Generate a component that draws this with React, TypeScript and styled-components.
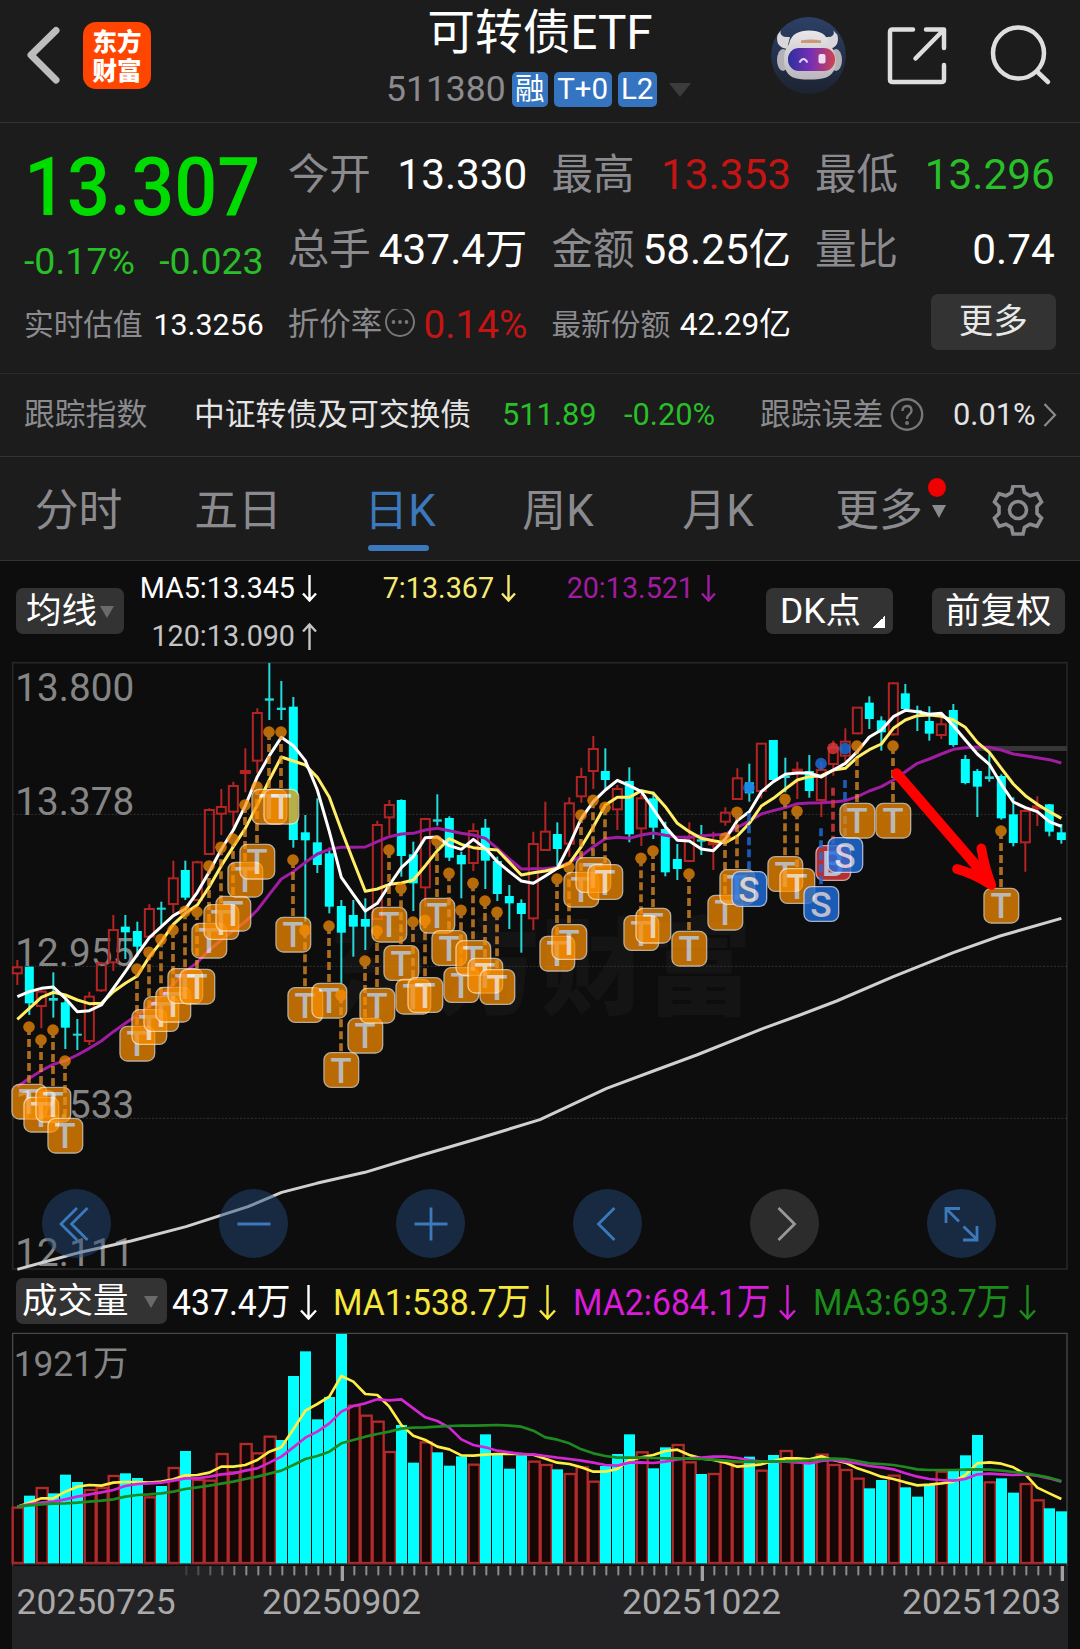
import React from 'react';
import styled, { createGlobalStyle } from 'styled-components';

const GlobalStyle = createGlobalStyle`
  * { box-sizing: border-box; }
  body {
    margin: 0;
    background: #0d0d0d;
    font-family: Roboto, "Noto Sans CJK SC", sans-serif;
    line-height: 1.2;
    color: #fff;
  }
  svg { display: block; flex-shrink: 0; }
`

const Page = styled.div`
  width: 1080px;
  height: 1649px;
  overflow: hidden;
  background: #0d0d0d;
`

/* ---------- header ---------- */

const Header = styled.header`
  display: grid;
  grid-template-columns: 384px 1fr 384px;
  height: 123px;
  background: #1c1c1c;
  border-bottom: 1px solid #333;
`

const HeaderLeft = styled.div`
  display: flex;
  align-items: flex-start;
  padding: 22px 0 0 23px;
  gap: 20px;
`

const Logo = styled.div`
  width: 68px;
  height: 67px;
  padding-top: 4px;
  border-radius: 13px;
  background: #ff4500;
  color: #fff;
  font-family: "Noto Sans CJK SC", sans-serif;
  font-size: 24.5px;
  font-weight: 900;
  line-height: 29px;
  text-align: center;
`

const HeaderTitle = styled.div`
  display: flex;
  flex-direction: column;
  align-items: center;
`

const Title = styled.div`
  height: 63px;
  line-height: 66px;
  font-size: 47.7px;
  white-space: nowrap;
`

const SubTitle = styled.div`
  display: flex;
  align-items: center;
  align-self: flex-start;
  height: 53px;
  padding-left: 2px;
  color: #8b8b8f;
  font-size: 35.5px;
`

const Tag = styled.span<{ $w: number }>`
  width: ${p => p.$w}px;
  height: 35px;
  margin-left: 6px;
  border-radius: 5px;
  background: #3474c0;
  color: #fff;
  font-size: 29.5px;
  line-height: 35px;
  text-align: center;
`

const HeaderRight = styled.div`
  display: flex;
  align-items: flex-start;
  padding: 17px 0 0 75px;
`

const Triangle = styled.i<{ $w: number; $h: number; $color: string; $left?: number }>`
  width: 0;
  height: 0;
  margin-left: ${p => p.$left || 0}px;
  border-left: ${p => p.$w / 2}px solid transparent;
  border-right: ${p => p.$w / 2}px solid transparent;
  border-top: ${p => p.$h}px solid ${p => p.$color};
`

/* ---------- quote ---------- */

const Quote = styled.section`
  height: 251px;
  padding: 14px 25px 0 24px;
  background: #1c1c1c;
  border-bottom: 1px solid #2a2a2a;
`

const QuoteRow = styled.div<{ $h: number }>`
  display: grid;
  grid-template-columns: repeat(4, 239.7px);
  column-gap: 24px;
  height: ${p => p.$h}px;
`

const Price = styled.div`
  height: 100px;
  line-height: 101px;
  color: #00dc00;
  font-size: 81px;
  font-weight: 500;
  transform: scaleX(0.935);
  transform-origin: left;
`

const Change = styled.div`
  display: flex;
  justify-content: space-between;
  height: 49px;
  line-height: 49px;
  color: #28bf28;
  font-size: 37.5px;
`

const Stat = styled.div<{ $h: number }>`
  display: flex;
  align-items: center;
  justify-content: space-between;
  height: ${p => p.$h}px;
  padding-top: 1px;
  white-space: nowrap;
`

const Label = styled.span<{ $size: number }>`
  color: #8b8b8f;
  font-size: ${p => p.$size}px;
`

const Value = styled.span<{ $size: number; $color?: string }>`
  color: ${p => p.$color || '#fff'};
  font-size: ${p => p.$size}px;
`

const MoreButton = styled.button`
  width: 125px;
  height: 56px;
  margin: -6px -1px 0 auto;
  border: none;
  border-radius: 7px;
  background: #333;
  color: #e8e8e8;
  font-family: inherit;
  font-size: 34.5px;
  line-height: 55px;
  padding: 0 0 1px;
`

/* ---------- tracked index ---------- */

const IndexRow = styled.section`
  display: flex;
  align-items: center;
  height: 83px;
  padding: 0 22px 0 24px;
  background: #1c1c1c;
  border-bottom: 1px solid #333;
  font-size: 30.8px;
  white-space: nowrap;
`

const IndexCell = styled.span<{ $w: number; $color: string; $left?: number }>`
  width: ${p => p.$w}px;
  margin-left: ${p => p.$left || 0}px;
  color: ${p => p.$color};
`

/* ---------- period tabs ---------- */

const Tabs = styled.nav`
  display: grid;
  grid-template-columns: 157px 162px 162px 154px 166px 179px 76px;
  height: 104px;
  background: #1c1c1c;
  border-bottom: 1px solid #333;
`

const Tab = styled.div<{ $active?: boolean }>`
  position: relative;
  display: flex;
  align-items: center;
  justify-content: center;
  height: 109px;
  color: ${p => (p.$active ? '#3c78bc' : '#8b8b8f')};
  font-size: 43.8px;
  white-space: nowrap;
`

const Underline = styled.i`
  position: absolute;
  bottom: 15px;
  left: 49px;
  width: 61px;
  height: 6px;
  border-radius: 3px;
  background: #3c78bc;
`

const RedDot = styled.i`
  position: absolute;
  top: 21px;
  right: 34px;
  width: 18px;
  height: 19px;
  border-radius: 50%;
  background: #f00000;
`

/* ---------- chart ---------- */

const InfoBar = styled.div`
  display: flex;
  height: 94px;
`

const Chip = styled.div<{ $w: number; $left?: number; $top: number }>`
  display: flex;
  align-items: center;
  flex-shrink: 0;
  width: ${p => p.$w}px;
  height: 46px;
  margin: ${p => p.$top}px 0 0 ${p => p.$left || 0}px;
  padding-top: 1px;
  border-radius: 7px;
  background: #333;
  font-size: 35.5px;
  white-space: nowrap;
`

const ChipText = styled.span<{ $left: number }>`
  margin-left: ${p => p.$left}px;
`

const Corner = styled.i`
  width: 12px;
  height: 12px;
  margin: 20px 0 0 12px;
  background: linear-gradient(135deg, transparent 50%, #fff 50%);
`

const MaGrid = styled.div`
  display: grid;
  grid-template-columns: 193px 199px 200px;
  grid-auto-rows: 48px;
  padding-top: 3px;
`

const MaItem = styled.div<{ $color: string }>`
  display: flex;
  align-items: center;
  justify-content: flex-end;
  gap: 7px;
  color: ${p => p.$color};
  font-size: 28.7px;
`

const KlineBox = styled.div`
  position: relative;
  height: 620px;
`

const Controls = styled.div`
  position: absolute;
  left: 42px;
  top: 534px;
  display: flex;
  gap: 108px;
`

const RoundButton = styled.div<{ $muted?: boolean }>`
  display: flex;
  align-items: center;
  justify-content: center;
  width: 69px;
  height: 69px;
  border-radius: 50%;
  color: ${p => (p.$muted ? '#999' : '#3c78bc')};
  background: ${p => (p.$muted ? '#2c2c2c' : 'rgba(36, 77, 126, 0.46)')};
`

const VolumeBar = styled.div`
  display: flex;
  height: 55px;
`

const VolumeItem = styled.div<{ $w: number; $left: number; $color: string }>`
  display: flex;
  align-items: center;
  width: ${p => p.$w}px;
  height: 55px;
  margin-left: ${p => p.$left}px;
  color: ${p => p.$color};
  font-size: 37.3px;
  svg { margin-left: auto; }
`

const Narrow = styled.span`
  width: 0;
  white-space: nowrap;
  span {
    display: inline-block;
    transform: scaleX(0.905);
    transform-origin: left;
  }
`

const Axis = styled.div`
  width: 1056px;
  height: 84px;
  margin-left: 12px;
  background: #232325;
`

const Dates = styled.div`
  display: grid;
  grid-template-columns: 245.5px 360px 280px 160px;
  padding-left: 4.5px;
  color: #aaa;
  font-size: 35.4px;
  line-height: 32px;
  height: 32px;
`

/* Plot data is kept in device pixels, three to one css pixel. */
const x = (i: number) => 52 + i * 36;

type Bar = [string, number, number, number, number];

// side, high, body top, body bottom, low
const candles: Bar[] = [
  ['r', 915, 937, 955, 990], ['c', 935, 935, 1045, 1080], ['r', 1005, 1010, 1053, 1120], ['c', 952, 1029, 1037, 1088],
  ['c', 1030, 1042, 1118, 1182], ['c', 1092, 1136, 1142, 1185], ['r', 1010, 1025, 1158, 1170], ['r', 922, 925, 1006, 1010],
  ['r', 780, 825, 922, 948], ['c', 780, 815, 832, 912], ['c', 800, 828, 875, 905], ['r', 748, 762, 845, 850],
  ['c', 740, 758, 764, 812], ['r', 617, 670, 747, 775], ['c', 617, 645, 728, 735], ['r', 617, 622, 735, 738],
  ['r', 460, 465, 597, 600], ['r', 402, 456, 476, 540], ['r', 380, 393, 470, 515], ['r', 280, 348, 354, 412],
  ['r', 160, 174, 317, 355], ['c', 24, 130, 137, 195], ['c', 78, 158, 165, 195], ['c', 126, 155, 555, 578],
  ['c', 480, 532, 556, 800], ['c', 430, 562, 630, 654], ['c', 578, 595, 755, 775], ['c', 735, 753, 833, 985],
  ['c', 735, 780, 815, 905], ['c', 730, 792, 815, 885], ['r', 497, 510, 792, 795], ['r', 435, 450, 487, 540],
  ['c', 433, 435, 603, 665], ['c', 560, 598, 685, 768], ['r', 488, 492, 697, 755], ['c', 418, 493, 500, 512],
  ['c', 484, 489, 608, 618], ['c', 590, 600, 628, 730], ['r', 505, 528, 624, 648], ['c', 492, 518, 617, 702],
  ['c', 605, 618, 717, 738], ['c', 690, 723, 745, 822], ['c', 733, 744, 777, 893], ['r', 530, 567, 790, 826],
  ['r', 440, 530, 585, 588], ['c', 502, 537, 582, 637], ['r', 427, 445, 566, 605], ['r', 338, 366, 424, 443],
  ['r', 243, 282, 348, 402], ['c', 280, 348, 375, 402], ['r', 390, 402, 463, 525], ['c', 337, 378, 538, 562],
  ['r', 418, 430, 520, 573], ['c', 410, 430, 518, 552], ['c', 500, 522, 652, 664], ['c', 567, 612, 642, 675],
  ['r', 502, 548, 618, 622], ['c', 510, 553, 560, 600], ['r', 530, 562, 568, 645], ['r', 457, 473, 500, 512],
  ['r', 340, 370, 432, 435], ['c', 326, 382, 415, 440], ['r', 266, 266, 408, 430], ['c', 255, 255, 375, 378],
  ['c', 308, 362, 369, 412], ['r', 320, 344, 350, 432], ['c', 300, 348, 408, 428], ['r', 320, 345, 435, 486],
  ['r', 257, 278, 327, 362], ['r', 220, 260, 302, 320], ['r', 157, 158, 235, 238], ['c', 124, 143, 192, 222],
  ['c', 184, 196, 232, 287], ['r', 82, 85, 238, 242], ['c', 87, 115, 162, 170], ['c', 152, 165, 172, 228],
  ['c', 154, 198, 236, 257], ['r', 178, 208, 240, 252], ['c', 147, 165, 270, 275], ['c', 300, 312, 384, 388],
  ['c', 342, 348, 395, 486], ['c', 292, 364, 372, 380], ['c', 358, 363, 490, 494], ['c', 427, 478, 564, 574],
  ['r', 462, 468, 562, 650], ['r', 424, 454, 460, 513], ['c', 447, 448, 530, 544], ['c', 507, 532, 555, 566],
];

const ma5 = [
  1025, 1010, 1000, 996, 1030, 1070, 1067, 1050, 1000, 950, 898, 848, 815, 782, 762, 712, 650, 583, 525, 452, 365, 302,
  247, 272, 317, 405, 530, 667, 718, 768, 745, 690, 638, 605, 548, 546, 572, 583, 553, 580, 620, 650, 678, 685, 663, 640,
  570, 490, 440, 405, 376, 392, 410, 462, 515, 556, 558, 582, 587, 552, 497, 470, 410, 380, 358, 354, 354, 366, 345, 325,
  290, 246, 225, 185, 166, 170, 178, 175, 212, 255, 297, 328, 388, 441, 458, 470, 500, 514,
];

const ma7 = [
  1093, 1060, 1027, 1012, 1020, 1035, 1046, 1045, 1010, 985, 963, 905, 860, 808, 775, 750, 695, 632, 575, 520, 450, 375,
  306, 318, 330, 367, 427, 525, 618, 709, 702, 688, 684, 675, 632, 587, 551, 568, 578, 582, 585, 622, 660, 653, 648, 640,
  625, 575, 515, 450, 427, 427, 407, 415, 455, 505, 530, 550, 557, 563, 543, 505, 453, 430, 402, 375, 365, 362, 345, 340,
  307, 284, 267, 220, 195, 182, 180, 184, 195, 217, 262, 292, 340, 387, 422, 448, 470, 490,
];

const ma20 = [
  1295, 1270, 1247, 1228, 1217, 1200, 1180, 1158, 1130, 1105, 1080, 1055, 1025, 988, 950, 922, 885, 855, 827, 800, 765,
  718, 672, 650, 622, 597, 583, 577, 577, 576, 560, 545, 537, 535, 525, 520, 527, 535, 540, 550, 580, 612, 642, 641, 641,
  637, 623, 603, 575, 551, 547, 550, 540, 534, 541, 547, 547, 542, 540, 538, 517, 498, 477, 467, 458, 446, 444, 443, 441,
  437, 425, 408, 395, 375, 350, 325, 312, 297, 283, 278, 276, 277, 285, 297, 302, 308, 314, 324,
];

const ma120 =
  '52,1843 155,1815 248,1790 393,1758 558,1715 744,1655 845,1612 950,1585 1095,1552 1256,1503 1430,1452 1620,1394 ' +
  '1820,1300 1960,1248 2090,1200 2290,1120 2400,1080 2510,1038 2680,965 2860,893 3000,843 3184,790';

// kind, index, dot, badge centre, start of the dashed line
type Mark = [string, number, number, number?, number?];

const marks: Mark[] = [
  ['T', 1, 1116], ['T', 2, 1155], ['T', 3, 1125], ['T', 4, 1218], ['T', 10, 942], ['T', 11, 892], ['T', 12, 853],
  ['T', 13, 825], ['T', 14, 769], ['T', 15, 771], ['T', 16, 633], ['T', 17, 577], ['T', 18, 552], ['T', 19, 450],
  ['T', 20, 396], ['T', 21, 231], ['T', 22, 231], ['T', 23, 615], ['T', 24, 826], ['T', 26, 813], ['T', 27, 1021],
  ['T', 29, 918], ['T', 30, 828], ['T', 31, 585], ['T', 32, 700], ['T', 33, 801], ['T', 34, 796], ['T', 35, 558],
  ['T', 36, 655], ['T', 37, 766], ['T', 38, 685], ['T', 39, 738], ['T', 40, 772], ['T', 45, 672], ['T', 46, 637],
  ['T', 47, 480], ['T', 48, 436], ['T', 49, 457], ['T', 52, 610], ['T', 53, 588], ['T', 56, 657], ['T', 59, 549],
  ['T', 60, 472], ['S', 61, 398, 702, 475], ['T', 64, 433], ['T', 65, 469], ['B', 68, 280, 624, 398],
  ['S', 67, 326, 747, 520], ['S', 69, 281, 600, 375], ['T', 70, 273], ['T', 73, 273], ['T', 82, 528],
];

const markColors: Record<string, string[]> = {
  T: ['#ff9000', '#ffedd0'],
  S: ['#1e6fe0', '#c8dcff'],
  B: ['#e03a3a', '#ffc8c8'],
};

// side and top of every volume column
const volumes =
  'r1043 c1007 r984 c1000 c944 c966 r990 r984 r948 c940 c954 r1012 c978 r924 c873 r960 r962 r882 r937 r852 r880 r830 ' +
  'c840 c648 c574 c778 c711 c522 r737 r767 r785 r876 c795 c908 r847 c877 c917 c889 r914 c823 c880 c926 c886 r905 r915 ' +
  'c928 r942 r922 r965 c918 c882 c823 r877 c925 c862 r855 r907 c942 r942 r907 r907 c890 r932 c885 r873 r907 c908 r884 ' +
  'r915 r930 r956 c985 c960 r947 c982 c1010 c975 r935 c933 c886 c825 r967 c955 c998 r972 r1021 c1045 c1054';

const vol1 = [
  1040, 1028, 1015, 1015, 995, 980, 975, 977, 968, 966, 966, 968, 965, 958, 946, 945, 938, 920, 920, 915, 900, 875, 862,
  808, 752, 732, 710, 648, 665, 702, 705, 740, 795, 827, 840, 860, 868, 886, 887, 884, 882, 882, 882, 884, 896, 908, 912,
  922, 935, 935, 927, 900, 892, 885, 873, 869, 885, 895, 900, 908, 920, 917, 913, 903, 895, 895, 898, 889, 900, 908, 925,
  937, 950, 957, 967, 976, 974, 970, 965, 945, 910, 907, 911, 922, 943, 983, 1000, 1017,
];

const vol2 = [
  1040, 1033, 1028, 1025, 1018, 1010, 1003, 997, 990, 978, 972, 970, 968, 962, 955, 955, 950, 943, 940, 932, 925, 908,
  890, 862, 833, 815, 790, 755, 738, 730, 718, 721, 718, 745, 772, 783, 803, 838, 855, 862, 872, 877, 882, 883, 888, 893,
  897, 902, 908, 915, 917, 908, 907, 909, 905, 898, 895, 893, 890, 890, 894, 900, 905, 905, 905, 907, 910, 903, 900, 905,
  910, 918, 922, 928, 940, 950, 957, 960, 962, 957, 943, 941, 943, 945, 943, 947, 955, 965,
];

const vol3 = [
  1040, 1036, 1033, 1031, 1030, 1028, 1025, 1022, 1018, 1010, 1005, 1003, 1000, 995, 987, 982, 977, 971, 965, 957, 950,
  941, 932, 915, 897, 888, 875, 850, 840, 830, 822, 815, 806, 803, 802, 800, 798, 797, 797, 796, 795, 797, 800, 812, 832,
  839, 850, 868, 880, 888, 893, 893, 893, 894, 895, 895, 896, 897, 899, 902, 905, 905, 905, 904, 904, 903, 901, 898, 896,
  897, 903, 910, 912, 915, 921, 928, 930, 930, 930, 929, 928, 929, 932, 936, 940, 946, 953, 963,
];

const toPoints = (list: number[]) => list.map((y, i) => x(i) + ',' + y).join(' ');

const Arrow = ({ h, w, up }: { h: number; w: number; up?: boolean }) => (
  <svg width={w} height={h} viewBox={`0 0 ${w} ${h}`} fill="none" stroke="currentColor" strokeWidth="2.4">
    <path
      transform={up ? `rotate(180 ${w / 2} ${h / 2})` : undefined}
      d={`M${w / 2} 0V${h - 1.5}M1 ${h - w / 2 - 1}L${w / 2} ${h - 1.5}L${w - 1} ${h - w / 2 - 1}`}
    />
  </svg>
);

const Robot = () => (
  <svg width="76" height="78" viewBox="0 0 76 78">
    <defs>
      <linearGradient id="bg" x1="0" y1="0" x2="0" y2="1">
        <stop offset="0" stopColor="#2c4066" />
        <stop offset="1" stopColor="#1c2331" />
      </linearGradient>
      <linearGradient id="visor" x1="0" y1="0" x2="1" y2="0">
        <stop offset="0" stopColor="#2d2f9e" />
        <stop offset="0.5" stopColor="#7a2fb4" />
        <stop offset="1" stopColor="#cf4450" />
      </linearGradient>
      <linearGradient id="shell" x1="0" y1="0" x2="0" y2="1">
        <stop offset="0" stopColor="#e9e7ea" />
        <stop offset="1" stopColor="#bab6bb" />
      </linearGradient>
    </defs>
    <ellipse cx="37.500" cy="38.500" rx="37.400" ry="38.400" fill="url(#bg)" />
    <path d="M9.500 13.500Q8 21 19 20L16 32Q4 30 6.500 18ZM62.500 13.500Q65 21 54 20L58 32Q69 30 66.500 18Z" fill="#d9d7dc" />
    <ellipse cx="12" cy="43" rx="6" ry="11" fill="#b3b0b8" />
    <ellipse cx="65" cy="43" rx="6" ry="11" fill="#b3b0b8" />
    <path d="M38 13.500C49 13.500 56 17 58 27C64 33 66 42 64 51C61 60 54 62.500 38 62.500C23 62.500 17 60 14 51C12 42 13 33 18 27C20 17 28 13.500 38 13.500Z" fill="url(#shell)" />
    <path d="M30 23.500Q40 21.500 50 23.500V26H30Z" fill="#c99a78" />
    <rect x="17" y="31" width="47" height="23" rx="11" fill="url(#visor)" />
    <path d="M28.500 45.500Q32.500 38.500 36.500 45.500" fill="none" stroke="#dcd8ff" strokeWidth="2" />
    <rect x="47.500" y="37" width="7" height="9.500" rx="2" fill="#f0dcf0" />
  </svg>
);

const Kline = () => (
  <svg width="1080" height="620" viewBox="0 0 3240 1860" fontFamily='Roboto, "Noto Sans CJK SC", sans-serif'>
    <text x="985" y="1053" fontSize="318" fontWeight="900" fill="#141414">东方财富</text>
    <rect x="38" y="23" width="3163" height="1819" fill="none" stroke="#262626" strokeWidth="5" />
    {[478, 934, 1390].map(y => (
      <line key={y} x1="38" x2="3201" y1={y} y2={y} stroke="#333" strokeWidth="3" strokeDasharray="6 5" />
    ))}
    <rect x="2915" y="273" width="286" height="15" fill="#363636" />
    <g fontSize="116" fill="#858585">
      <text x="46" y="138">13.800</text>
      <text x="46" y="480">13.378</text>
      <text x="46" y="933">12.955</text>
      <text x="46" y="1388">12.533</text>
      <text x="46" y="1833">12.111</text>
    </g>
    {candles.map(([side, h, t, b, l], i) => side === 'c' ? (
      <g key={i}>
        <rect x={x(i) - 3} y={h} width="6" height={l - h} fill="#22dada" />
        <rect x={x(i) - 13.5} y={t} width="27" height={b - t} fill={b - t < 10 ? '#22dada' : '#00ffff'} />
      </g>
    ) : (
      <g key={i} stroke="#b22424" strokeWidth="6" fill="none">
        <path d={`M${x(i)} ${h}V${t}M${x(i)} ${b}V${l}`} />
        <rect x={x(i) - 13.5} y={t} width="27" height={b - t} />
      </g>
    ))}
    <g fill="none" strokeWidth="9" strokeLinejoin="round">
      <polyline points={ma120} stroke="#d0d0d0" />
      <polyline points={toPoints(ma20)} stroke="#a01ca0" />
      <polyline points={toPoints(ma7)} stroke="#ffee66" />
      <polyline points={toPoints(ma5)} stroke="#fff" />
    </g>
    {marks.map(([kind, i, dot, badge = dot + 224, from = dot]) => (
      <g key={i} opacity={kind === 'T' ? 0.71 : 0.8}>
        <circle cx={x(i) - 1} cy={dot} r="17.5" fill={markColors[kind][0]} />
        <path
          d={`M${x(i) - 1} ${from}V${badge - 53}`}
          stroke={kind === 'T' ? '#ef9426' : markColors[kind][0]}
          strokeWidth="11"
          strokeDasharray="24 12"
        />
        <rect
          x={x(i) - 52}
          y={badge - 52}
          width="104"
          height="104"
          rx="22"
          fill={markColors[kind][0]}
          stroke={markColors[kind][1]}
          strokeWidth="4"
        />
        <text
          x={x(i) - 1}
          y={badge + 38}
          textAnchor="middle"
          fontSize={kind === 'T' ? 104 : 106}
          fontWeight="500"
          fill={kind === 'T' ? '#fff' : '#e6eaff'}
        >
          {kind}
        </text>
      </g>
    ))}
    <g fill="none" stroke="#ff0000" strokeLinecap="round" strokeLinejoin="round">
      <path d="M2690 355L2962 670" strokeWidth="31" />
      <path d="M2944 580Q2954 640 2974 690Q2920 655 2871 642" strokeWidth="29" />
      <path d="M2935 640L2970 685L2915 650Z" strokeWidth="20" fill="#ff0000" />
    </g>
  </svg>
);

const VolumeChart = () => (
  <svg width="1080" height="236" viewBox="0 510 3240 708">
    <path d="M38 1218V520H3201V1218" fill="none" stroke="#484848" strokeWidth="4" />
    <text x="41" y="648" fontSize="106" fill="#858585">1921万</text>
    {volumes.split(' ').map((v, i) => {
      const top = Number(v.slice(1));
      return v[0] === 'c' ? (
        <rect key={i} x={x(i) - 16} y={top} width="33" height={1211 - top} fill="#00ffff" />
      ) : (
        <rect key={i} x={x(i) - 14} y={top} width="33" height={1209 - top} fill="#140706" stroke="#b22a2a" strokeWidth="7" />
      );
    })}
    <line x1="38" x2="3201" y1="1212" y2="1212" stroke="#5c2a2a" strokeWidth="3" />
    <g fill="none" strokeWidth="8" strokeLinejoin="round">
      <polyline points={toPoints(vol1)} stroke="#ffee44" />
      <polyline points={toPoints(vol2)} stroke="#d426d4" />
      <polyline points={toPoints(vol3)} stroke="#1f8a1f" />
    </g>
  </svg>
);

const Ticks = () => (
  <svg width="1056" height="20" viewBox="36 0 3168 60">
    {candles.map((_, i) => {
      if (i < 14) return null;
      const major = i % 30 === 27;
      return (
        <rect
          key={i}
          x={x(i) + (major ? -2 : 0)}
          y="0"
          width={major ? 10 : 6}
          height={major ? 45 : 28}
          fill={major ? '#a0a0a0' : '#8c8c8c'}
          opacity={i < 19 ? (i - 12) / 7 : 1}
        />
      );
    })}
  </svg>
);

const App = () => {
  return (
    <Page>
      <GlobalStyle />

      <Header>
        <HeaderLeft>
          <svg width="40" height="66" viewBox="0 0 40 66" fill="none" stroke="#bdbdbd" strokeWidth="7">
            <path d="M33 8.5L8 33L33 58" strokeLinejoin="round" strokeLinecap="round" />
          </svg>
          <Logo>东方<br />财富</Logo>
        </HeaderLeft>
        <HeaderTitle>
          <Title>可转债ETF</Title>
          <SubTitle>
            511380
            <Tag $w={36}>融</Tag>
            <Tag $w={58}>T+0</Tag>
            <Tag $w={39}>L2</Tag>
            <Triangle $w={22} $h={14} $color="#3c3c3c" $left={12} />
          </SubTitle>
        </HeaderTitle>
        <HeaderRight>
          <Robot />
          <svg width="212" height="76" viewBox="-4 0 212 76" fill="none" stroke="#dedede" strokeWidth="4.5" strokeLinecap="round" strokeLinejoin="round">
            <path d="M62 12.500H41.500Q39 12.500 39 15V62.500Q39 65 41.500 65H90.500Q93 65 93 62.500V48M75 12.500H93V31M92 13.500L64.500 41.500" />
            <circle cx="167.500" cy="36" r="25.500" />
            <path d="M186 54.500L197 65" />
          </svg>
        </HeaderRight>
      </Header>

      <Quote>
        <QuoteRow $h={150}>
          <div>
            <Price>13.307</Price>
            <Change><span>-0.17%</span><span>-0.023</span></Change>
          </div>
          <div>
            <Stat $h={75}><Label $size={41.5}>今开</Label><Value $size={42.3}>13.330</Value></Stat>
            <Stat $h={75}><Label $size={41.5}>总手</Label><Value $size={42.3}>437.4万</Value></Stat>
          </div>
          <div>
            <Stat $h={75}><Label $size={41.5}>最高</Label><Value $size={42.3} $color="#c41414">13.353</Value></Stat>
            <Stat $h={75}><Label $size={41.5}>金额</Label><Value $size={42.3}>58.25亿</Value></Stat>
          </div>
          <div>
            <Stat $h={75}><Label $size={41.5}>最低</Label><Value $size={42.3} $color="#28bf28">13.296</Value></Stat>
            <Stat $h={75}><Label $size={41.5}>量比</Label><Value $size={42.3}>0.74</Value></Stat>
          </div>
        </QuoteRow>
        <QuoteRow $h={75}>
          <Stat $h={75}><Label $size={29.7}>实时估值</Label><Value $size={30.3}>13.3256</Value></Stat>
          <Stat $h={75}>
            <Label $size={31.5}>折价率</Label>
            <svg width="38" height="32" viewBox="0 0 38 32" fill="#77777a">
              <circle cx="16" cy="14" r="14" fill="none" stroke="#77777a" strokeWidth="2" transform="translate(0 -1)" style={{ overflow: 'visible' }} />
              <circle cx="9.500" cy="13" r="1.900" />
              <circle cx="16" cy="13" r="1.900" />
              <circle cx="22.500" cy="13" r="1.900" />
            </svg>
            <Value $size={38.7} $color="#c41414">0.14%</Value>
          </Stat>
          <Stat $h={75}><Label $size={29.7}>最新份额</Label><Value $size={31.7}>42.29亿</Value></Stat>
          <Stat $h={75}><MoreButton>更多</MoreButton></Stat>
        </QuoteRow>
      </Quote>

      <IndexRow>
        <IndexCell $w={170} $color="#8b8b8f">跟踪指数</IndexCell>
        <IndexCell $w={308} $color="#e4e4e4">中证转债及可交换债</IndexCell>
        <IndexCell $w={122} $color="#28bf28">511.89</IndexCell>
        <IndexCell $w={136} $color="#28bf28">-0.20%</IndexCell>
        <IndexCell $w={130} $color="#8b8b8f">跟踪误差</IndexCell>
        <svg width="34" height="34" viewBox="0 0 34 34" fill="none" stroke="#77777a" strokeWidth="2.400">
          <circle cx="17" cy="16.500" r="15.200" />
          <path d="M12.500 13Q12.500 8 17 8T21.500 12.500Q21.500 15 19 16.800Q17 18.200 17 21" />
          <circle cx="17" cy="25" r="0.800" fill="#77777a" />
        </svg>
        <IndexCell $w={90} $left={29} $color="#e4e4e4">0.01%</IndexCell>
        <svg width="14" height="26" viewBox="0 0 14 26" fill="none" stroke="#8b8b8f" strokeWidth="2.200">
          <path d="M1.500 2L12 13L1.500 24" />
        </svg>
      </IndexRow>

      <Tabs>
        <Tab>分时</Tab>
        <Tab>五日</Tab>
        <Tab $active>日K<Underline /></Tab>
        <Tab>周K</Tab>
        <Tab>月K</Tab>
        <Tab>
          更多
          <Triangle $w={15} $h={13} $color="#8b8b8f" $left={9} />
          <RedDot />
        </Tab>
        <Tab>
          <svg width="54" height="54" viewBox="0 0 54 54" fill="none" stroke="#8b8b8f" strokeWidth="3.600">
            <path
              transform="translate(0 -2)"
              d="M22 3H32L33.500 9.500L39 12.700L46 10.700L50.500 19L46 23.500V30.500L50.500 35L46 43.300L39 41.300L33.500 44.500L32 51H22L20.500 44.500L15 41.300L8 43.300L3.500 35L8 30.500V23.500L3.500 19L8 10.700L15 12.700L20.500 9.500Z"
            />
            <circle cx="27" cy="25" r="8.500" />
          </svg>
        </Tab>
      </Tabs>

      <InfoBar>
        <Chip $w={108} $left={16} $top={27}>
          <ChipText $left={10}>均线</ChipText>
          <Triangle $w={15} $h={12} $color="#6a6a6a" $left={3} />
        </Chip>
        <MaGrid>
          <MaItem $color="#fff">MA5:13.345<Arrow w={15} h={27} /></MaItem>
          <MaItem $color="#f7ea74">7:13.367<Arrow w={15} h={27} /></MaItem>
          <MaItem $color="#a01ca0">20:13.521<Arrow w={15} h={27} /></MaItem>
          <MaItem $color="#c4c4c4">120:13.090<Arrow w={15} h={27} up /></MaItem>
        </MaGrid>
        <Chip $w={127} $left={50} $top={27}>
          <ChipText $left={14}>DK点</ChipText>
          <Corner />
        </Chip>
        <Chip $w={133} $left={39} $top={27}>
          <ChipText $left={13}>前复权</ChipText>
        </Chip>
      </InfoBar>

      <KlineBox>
        <Kline />
        <Controls>
          <RoundButton>
            <svg width="36" height="36" viewBox="0 0 36 36" fill="none" stroke="currentColor" strokeWidth="2.800">
              <path d="M18 2L2 18L18 34M28.500 2L12.500 18L28.500 34" />
            </svg>
          </RoundButton>
          <RoundButton>
            <svg width="36" height="36" viewBox="0 0 36 36" fill="none" stroke="currentColor" strokeWidth="2.800">
              <path d="M1.500 18H34.500" />
            </svg>
          </RoundButton>
          <RoundButton>
            <svg width="36" height="36" viewBox="0 0 36 36" fill="none" stroke="currentColor" strokeWidth="2.800">
              <path d="M1.500 18H34.500M18 1.500V34.500" />
            </svg>
          </RoundButton>
          <RoundButton>
            <svg width="36" height="36" viewBox="0 0 36 36" fill="none" stroke="currentColor" strokeWidth="2.800">
              <path d="M24.500 2L8.500 18L24.500 34" />
            </svg>
          </RoundButton>
          <RoundButton $muted>
            <svg width="36" height="36" viewBox="0 0 36 36" fill="none" stroke="currentColor" strokeWidth="2.800">
              <path d="M11.500 2L27.500 18L11.500 34" />
            </svg>
          </RoundButton>
          <RoundButton>
            <svg width="36" height="36" viewBox="0 0 36 36" fill="none" stroke="currentColor" strokeWidth="2.800">
              <path d="M2 17V2.500H16M2.500 3L15 15.500M19.500 20.500L33 33.500M33 20V34H19" />
            </svg>
          </RoundButton>
        </Controls>
      </KlineBox>

      <VolumeBar>
        <Chip $w={151} $left={16} $top={3}>
          <ChipText $left={6}>成交量</ChipText>
          <Triangle $w={15} $h={12} $color="#6a6a6a" $left={15} />
        </Chip>
        <VolumeItem $w={145} $left={5} $color="#fff"><Narrow><span>437.4万</span></Narrow><Arrow w={17} h={35} /></VolumeItem>
        <VolumeItem $w={223} $left={16} $color="#f7e83c"><Narrow><span>MA1:538.7万</span></Narrow><Arrow w={17} h={35} /></VolumeItem>
        <VolumeItem $w={223} $left={17} $color="#d81cd8"><Narrow><span>MA2:684.1万</span></Narrow><Arrow w={17} h={35} /></VolumeItem>
        <VolumeItem $w={223} $left={17} $color="#1a8c1a"><Narrow><span>MA3:693.7万</span></Narrow><Arrow w={17} h={35} /></VolumeItem>
      </VolumeBar>
      <VolumeChart />
      <Axis>
        <Ticks />
        <Dates>
          <span>20250725</span>
          <span>20250902</span>
          <span>20251022</span>
          <span>20251203</span>
        </Dates>
      </Axis>
    </Page>
  );
}

export default App;
